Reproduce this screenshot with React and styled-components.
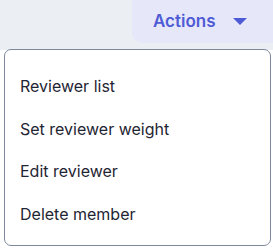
import React from 'react';
import styled, { createGlobalStyle } from 'styled-components';

const GlobalStyle = createGlobalStyle`
  html, body {
    margin: 0;
    padding: 0;
    background: #ffffff;
    font-family: Inter, "Noto Sans", sans-serif;
  }
`

const Page = styled.div`
  width: 273px;
  height: 248px;
  display: flex;
  flex-direction: column;
  overflow: hidden;
`

const TopBar = styled.div`
  height: 50px;
  flex: none;
  background: #ebeef2;
  display: flex;
  justify-content: flex-end;
  align-items: flex-start;
`

const ActionsButton = styled.button`
  width: 141px;
  height: 43px;
  border: none;
  border-radius: 0 0 0 10px;
  background: #e6e8fa;
  color: #4f5bd5;
  font-family: Inter, sans-serif;
  font-size: 17px;
  font-weight: 600;
  display: flex;
  align-items: center;
  gap: 17px;
  padding: 0 0 2px 21px;
  cursor: pointer;
`

const Caret = styled.span`
  width: 0;
  height: 0;
  border-left: 7px solid transparent;
  border-right: 7px solid transparent;
  border-top: 7px solid #4f5bd5;
  margin-top: 2px;
`

const Menu = styled.ul`
  list-style: none;
  margin: -1px 2px 0 4px;
  padding: 15px 0 10px;
  background: #ffffff;
  border: 1.5px solid #7e889b;
  border-radius: 7px;
  display: flex;
  flex-direction: column;
`

const MenuItem = styled.li`
  height: 42.5px;
  display: flex;
  align-items: center;
  padding-left: 15px;
  font-size: 16px;
  color: #1f2533;
  cursor: pointer;
`

const items = ['Reviewer list', 'Set reviewer weight', 'Edit reviewer', 'Delete member'];

export default function App() {
  return (
    <Page>
      <GlobalStyle />
      <TopBar>
        <ActionsButton>
          Actions
          <Caret />
        </ActionsButton>
      </TopBar>
      <Menu>
        {items.map(item => (
          <MenuItem key={item}>{item}</MenuItem>
        ))}
      </Menu>
    </Page>
  );
}
